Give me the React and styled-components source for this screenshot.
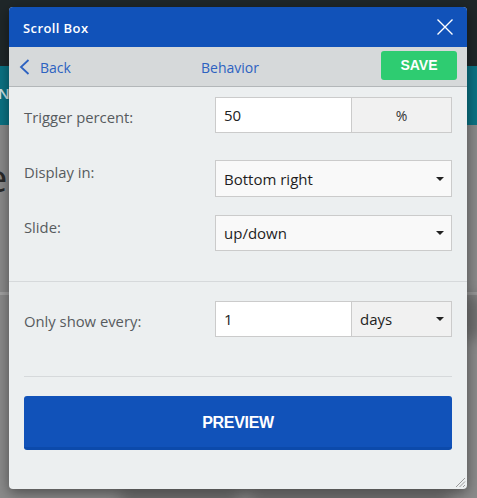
import React from "react";
import styled, { createGlobalStyle } from "styled-components";

const Global = createGlobalStyle`
  html, body { margin: 0; padding: 0; }
  body { width: 477px; height: 498px; overflow: hidden; font-family: "Open Sans", sans-serif; }
  * { box-sizing: border-box; }
`;

const Page = styled.div`
  position: relative;
  width: 477px;
  height: 498px;
  overflow: hidden;
  background: #8b8b8b;
  display: flex;
  flex-direction: column;
`;

const TopBar = styled.div`
  height: 66px;
  background: #1f2729;
`;

const TealBand = styled.div`
  height: 59px;
  background: #0b7384;
  display: flex;
  align-items: center;
  padding-bottom: 6px;
  color: #cfe3e6;
  font: 600 15px "Open Sans", sans-serif;
  letter-spacing: 1px;
  margin-left: -2px;
`;

const BackHeading = styled.div`
  display: flex;
  justify-content: space-between;
  margin: 32px -12px 0 -14px;
  font: 400 38px "Open Sans", sans-serif;
  color: #2a2a2a;
  line-height: 40px;
`;

const BackLine = styled.div`
  height: 3px;
  background: #a2a2a2;
  margin-top: 95px;
`;

const Blur = styled.div`
  position: absolute;
  background: #4a4a4a;
  filter: blur(7px);
  border-radius: 6px;
  opacity: 0.5;
`;

const Modal = styled.div`
  position: absolute;
  top: 7px;
  left: 9px;
  width: 458px;
  height: 482px;
  background: #eceff0;
  border-radius: 4px;
  overflow: hidden;
  box-shadow: 0 4px 14px rgba(0, 0, 0, 0.45);
  display: flex;
  flex-direction: column;
`;

const Header = styled.div`
  height: 40px;
  background: #1152b9;
  display: flex;
  align-items: center;
  justify-content: space-between;
  padding: 0 14px 0 14px;
  color: #fff;
`;

const Title = styled.div`
  font: 600 13px "Open Sans", sans-serif;
  letter-spacing: 0.4px;
  padding-top: 1px;
`;

const CloseBtn = styled.button`
  border: 0;
  background: none;
  padding: 0;
  width: 16px;
  height: 16px;
  display: flex;
  cursor: pointer;
`;

const SubBar = styled.div`
  height: 40px;
  background: #d6d9da;
  border-bottom: 1px solid #b3b7b9;
  display: grid;
  grid-template-columns: 1fr auto 1fr;
  align-items: center;
  padding: 0 10px 0 10px;
`;

const BackLink = styled.a`
  display: flex;
  align-items: center;
  gap: 10px;
  color: #2d62c1;
  font: 400 14px "Open Sans", sans-serif;
  text-decoration: none;
  justify-self: start;
  padding-top: 1px;
`;

const SubTitle = styled.div`
  color: #2d62c1;
  font: 400 14px "Open Sans", sans-serif;
  padding-top: 1px;
  margin-left: -16px;
`;

const SaveBtn = styled.button`
  justify-self: end;
  width: 76px;
  height: 29px;
  border: 0;
  border-radius: 3px;
  background: #2ecc71;
  color: #fff;
  font: 700 14px "Liberation Sans", Arial, sans-serif;
  padding: 0;
  margin-top: -3px;
`;

const Section = styled.div`
  padding: ${(p) => p.$pad};
  border-bottom: ${(p) => (p.$divider ? "1px solid #d6d9db" : "none")};
  display: flex;
  flex-direction: column;
`;

const Row = styled.div`
  display: flex;
  align-items: flex-start;
  margin-top: ${(p) => p.$mt || 0}px;
`;

const Label = styled.div`
  width: 191px;
  color: #575b5e;
  font: 400 14.8px "Open Sans", sans-serif;
  line-height: 20px;
  padding-top: ${(p) => p.$offset}px;
`;

const Control = styled.div`
  width: 237px;
  height: ${(p) => p.$h || 36}px;
  display: flex;
  border: 1px solid #cbcbcb;
`;

const Input = styled.div`
  width: 136px;
  background: #fff;
  border-right: 1px solid #cbcbcb;
  display: flex;
  align-items: center;
  padding-left: 8px;
  color: #222;
  font: 400 15px "Open Sans", sans-serif;
`;

const Addon = styled.div`
  flex: 1;
  background: #f1f1f1;
  display: flex;
  align-items: center;
  justify-content: center;
  color: #333;
  font: 400 14px "Open Sans", sans-serif;
`;

const Select = styled.div`
  flex: 1;
  background: ${(p) => p.$bg || "#f9f9f9"};
  display: flex;
  align-items: center;
  justify-content: space-between;
  padding: 0 7px 0 8px;
  color: #1e1e1e;
  font: 400 15px "Open Sans", sans-serif;
`;

const Caret = styled.span`
  width: 0;
  height: 0;
  border-left: 4px solid transparent;
  border-right: 4px solid transparent;
  border-top: 4px solid #222;
`;

const Footer = styled.div`
  padding: 0 15px;
  display: flex;
  flex-direction: column;
`;

const Rule = styled.div`
  height: 1px;
  background: #d6d9db;
  margin-top: 39px;
`;

const PreviewBtn = styled.button`
  margin-top: 19px;
  height: 54px;
  width: 100%;
  border: 0;
  border-bottom: 3px solid #0c4aab;
  border-radius: 3px;
  background: #1152b9;
  color: #fff;
  font: 700 16px "Liberation Sans", Arial, sans-serif;
  letter-spacing: -0.3px;
  padding: 3px 0 0;
`;

const Grip = styled.svg`
  position: absolute;
  right: 1px;
  bottom: 1px;
`;

export default function App() {
  return (
    <>
      <Global />
      <Page>
        <TopBar />
        <TealBand>N.</TealBand>
        <BackHeading>
          <span>e</span>
          <span>i</span>
        </BackHeading>
        <BackLine />
        <Blur style={{ left: 120, top: 490, width: 120, height: 18 }} />
        <Blur style={{ left: 250, top: 492, width: 200, height: 18 }} />
        <Blur style={{ left: 464, top: 295, width: 18, height: 45 }} />
        <Modal>
          <Header>
            <Title>Scroll Box</Title>
            <CloseBtn aria-label="Close">
              <svg width="16" height="16" viewBox="0 0 16 16">
                <path d="M0.5 0.5 L15.5 15.5 M15.5 0.5 L0.5 15.5" stroke="#fff" strokeWidth="1.4" fill="none" />
              </svg>
            </CloseBtn>
          </Header>
          <SubBar>
            <BackLink href="#">
              <svg width="11" height="16" viewBox="0 0 11 16">
                <path d="M9.5 1 L2 8 L9.5 15" stroke="#2d62c1" strokeWidth="1.8" fill="none" />
              </svg>
              Back
            </BackLink>
            <SubTitle>Behavior</SubTitle>
            <SaveBtn>SAVE</SaveBtn>
          </SubBar>
          <Section $pad="10px 15px 30px" $divider>
            <Row>
              <Label $offset={10}>Trigger percent:</Label>
              <Control>
                <Input>50</Input>
                <Addon>%</Addon>
              </Control>
            </Row>
            <Row $mt={27}>
              <Label $offset={2}>Display in:</Label>
              <Control $h={37}>
                <Select>
                  Bottom right
                  <Caret />
                </Select>
              </Control>
            </Row>
            <Row $mt={18}>
              <Label $offset={2}>Slide:</Label>
              <Control>
                <Select>
                  up/down
                  <Caret />
                </Select>
              </Control>
            </Row>
          </Section>
          <Section $pad="19px 15px 0">
            <Row>
              <Label $offset={10}>Only show every:</Label>
              <Control>
                <Input>1</Input>
                <Select $bg="#f1f1f1">
                  days
                  <Caret />
                </Select>
              </Control>
            </Row>
          </Section>
          <Footer>
            <Rule />
            <PreviewBtn>PREVIEW</PreviewBtn>
          </Footer>
          <Grip width="12" height="12" viewBox="0 0 12 12">
            <path d="M11 2 L2 11 M11 5.5 L5.5 11 M11 9 L9 11" stroke="#9a9a9a" strokeWidth="1" fill="none" />
          </Grip>
        </Modal>
      </Page>
    </>
  );
}
